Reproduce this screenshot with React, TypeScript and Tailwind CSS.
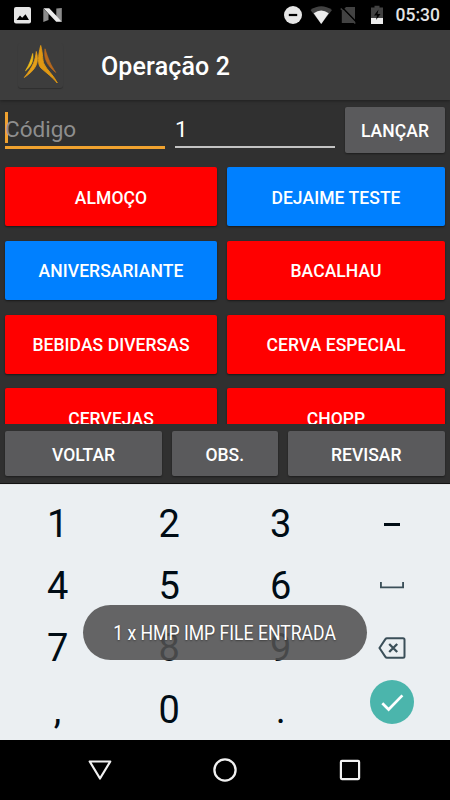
const categories = [
  { name: "ALMOÇO", tone: "bg-[#ff0000]" },
  { name: "DEJAIME TESTE", tone: "bg-[#0080ff]" },
  { name: "ANIVERSARIANTE", tone: "bg-[#0080ff]" },
  { name: "BACALHAU", tone: "bg-[#ff0000]" },
  { name: "BEBIDAS DIVERSAS", tone: "bg-[#ff0000]" },
  { name: "CERVA ESPECIAL", tone: "bg-[#ff0000]" },
  { name: "CERVEJAS", tone: "bg-[#ff0000]" },
  { name: "CHOPP", tone: "bg-[#ff0000]" },
];

const keys = ["1", "2", "3", "-", "4", "5", "6", "space", "7", "8", "9", "del", ",", "0", ".", "ok"];

function StatusBar() {
  return (
    <div className="flex h-[30px] shrink-0 items-center justify-between bg-black">
      <svg className="ml-[14px]" width="49" height="30" viewBox="0 0 49 30">
        <rect x="0" y="7" width="17" height="16.5" rx="2" fill="#e6e6e6" />
        <path d="M2.500 20l3.500-4.500 2.200 2.300 3.300-3.600L15 20z" fill="#000" />
        <path d="M29.300 8.500l5.200 5.500v6L29.300 22zM42.300 8.500l5.500-.5v13.500l-5.500-5z" fill="#8c8c8c" />
        <path d="M29.500 8.300h5.700L48 21.800h-5.800z" fill="#ececec" />
      </svg>
      <div className="flex items-center">
        <svg width="102" height="30" viewBox="0 0 102 30">
          <circle cx="9" cy="15" r="9" fill="#e6e6e6" />
          <rect x="4.800" y="13.900" width="8.400" height="2.200" fill="#000" />
          <path d="M26.500 10Q37.200 2.500 48 10L37.200 24z" fill="#424242" />
          <path d="M29.700 13.200Q37.200 7.800 44.700 13.200L37.200 24z" fill="#ececec" />
          <path d="M62 7h9v16H57.800V11.500z" fill="#424242" />
          <path d="M58.300 7.500L73.300 23" stroke="#000" strokeWidth="1.500" />
          <path d="M56.800 8.500L71.300 23.500" stroke="#424242" strokeWidth="1.500" />
          <path d="M87 7.500h3.500V5.700h5v1.800H99V24H87z" fill="#424242" />
          <path d="M87 18h12v6H87z" fill="#ececec" />
          <path d="M94.500 9.500l-4.500 6h3l-1 4.500 4.500-6h-3z" fill="#000" />
        </svg>
        <span className="mr-[10px] ml-[10px] text-[17.500px] leading-[32px] font-medium text-[#e4e4e4]">05:30</span>
      </div>
    </div>
  );
}

function AppBar() {
  return (
    <header className="z-10 flex h-[70px] shrink-0 items-center bg-[#3d3d3d] shadow-[0_1px_3px_rgba(0,0,0,0.35)]">
      <div className="ml-[18px] h-[45px] w-[45px] rounded-[3px] shadow-[0_1px_1px_rgba(0,0,0,0.25)]">
        <svg width="45" height="45" viewBox="0 0 45 45">
          <path d="M14.700 10.500C13 17 11.500 21 7.500 27.800C13.500 23 15.800 17.500 14.700 10.500z" fill="#f1bd18" stroke="#edb91a" strokeWidth=".7" />
          <path d="M18.300 8.500C17 18 16 22 6.300 34.500C18 26.500 21.500 20 18.300 8.500z" fill="#e5a019" stroke="#e39c18" strokeWidth=".8" />
          <path d="M22.700 2.500C20 13 19.500 22 23 25C28 29.500 35 34.500 39.300 40C36 32.500 28.500 26.500 26 21C24.300 17 25 11 22.700 2.500z" fill="#e09813" stroke="#e09813" strokeWidth=".9" />
          <path d="M27 5.800C25.500 16 29 22 37.700 29.500C32.500 21.500 30.200 16 27 5.800z" fill="#b8681c" stroke="#b8681c" strokeWidth=".7" />
        </svg>
      </div>
      <h1 className="ml-[38px] pt-[3px] text-[25px] leading-[30px] font-medium tracking-[0.15px] text-white">Operação 2</h1>
    </header>
  );
}

function EntryRow() {
  return (
    <div className="flex h-[67px] shrink-0 px-[5px] pt-[7px] text-[22.500px] leading-[30px]">
      <div className="mt-[5px] h-[37px] w-[160px] border-b-[3px] border-[#f0a22f] text-[#8e8e8e]">
        <div className="flex h-[31px] items-center border-l-[3px] border-[#f0a22f]">
          <span className="-ml-[3px] pt-[2px]">Código</span>
        </div>
      </div>
      <div className="mt-[5px] ml-[10px] h-[35.500px] w-[160px] border-b-2 border-[#c3c3c3] text-white">
        <span className="block pt-[2px]">1</span>
      </div>
      <button className="ml-[10px] h-[46px] w-[100px] rounded-[2px] bg-[#5a5a5c] pt-[1px] text-[17.500px] font-medium tracking-[0.07px] text-white shadow-[0_1px_2px_rgba(0,0,0,0.4)]">
        LANÇAR
      </button>
    </div>
  );
}

function Keypad() {
  return (
    <div className="grid h-[256px] shrink-0 auto-rows-[62px] grid-cols-[repeat(4,111.600px)] justify-center border-t border-[#e3e6e8] bg-[#ebeff2] pt-[8px] text-[38px] text-[#000c15]">
      {keys.map((k) => (
        <div key={k} className="flex items-center justify-center">
          {k === "-" && <span className="h-[3px] w-4 bg-[#000c15]" />}
          {k === "space" && (
            <svg width="24" height="8" viewBox="0 0 24 8" className="-mt-[3px]">
              <path d="M.9 1v5.400h22.200V1" fill="none" stroke="#3b4f59" strokeWidth="1.900" />
            </svg>
          )}
          {k === "del" && (
            <svg width="28" height="22" viewBox="0 0 28 22" className="-mt-px">
              <path
                d="M9 1.200h16q1.500 0 1.500 1.500v16.600q0 1.500-1.500 1.500H9q-1 0-1.600-.9L1.500 11 7.400 2.100Q8 1.200 9 1.200z"
                fill="none"
                stroke="#3b4f59"
                strokeWidth="2"
              />
              <path d="M11.200 7l8 8m0-8l-8 8" stroke="#3b4f59" strokeWidth="2.300" />
            </svg>
          )}
          {k === "ok" && (
            <div className="-mt-[15.500px] h-11 w-11 rounded-full bg-[#4bb5ac]">
              <svg width="44" height="44" viewBox="0 0 44 44">
                <path d="M12.300 23.300l6.300 6.200 13.800-14.100" fill="none" stroke="#fff" strokeWidth="2.700" />
              </svg>
            </div>
          )}
          {!["-", "space", "del", "ok"].includes(k) && <span>{k}</span>}
        </div>
      ))}
    </div>
  );
}

function NavBar() {
  return (
    <nav className="flex h-[60px] shrink-0 items-center justify-center gap-[99px] bg-black">
      <svg width="26" height="26" viewBox="0 0 26 26" fill="none" stroke="#f1f1f1" strokeWidth="2.200" strokeLinejoin="round">
        <path d="M2.700 4.500h20.600L13 21.500z" />
      </svg>
      <svg width="26" height="26" viewBox="0 0 26 26" fill="none" stroke="#f1f1f1" strokeWidth="2.300">
        <circle cx="13" cy="13" r="10.600" />
      </svg>
      <svg width="26" height="26" viewBox="0 0 26 26" fill="none" stroke="#f1f1f1" strokeWidth="2.200">
        <rect x="3.900" y="3.900" width="18.200" height="18.200" rx="1" />
      </svg>
    </nav>
  );
}

export default function App() {
  return (
    <div className="relative flex h-[800px] w-[450px] flex-col overflow-hidden bg-[#303030] font-[Roboto,sans-serif]">
      <StatusBar />
      <AppBar />
      <EntryRow />
      <div className="grid h-[257px] shrink-0 auto-rows-[59.300px] grid-cols-[212px_218px] content-start gap-x-[10px] gap-y-[14.500px] overflow-hidden px-[5px]">
        {categories.map((c) => (
          <button
            key={c.name}
            className={`rounded-[2px] pt-[2px] text-[17.500px] font-medium tracking-[0.07px] text-white shadow-[0_1px_2px_rgba(0,0,0,0.5)] ${c.tone}`}
          >
            {c.name}
          </button>
        ))}
      </div>
      <div className="flex h-[60px] shrink-0 gap-[10px] border-b border-black/60 px-[5px] pt-[7px] text-[17.500px] font-medium text-white">
        <button className="h-[45px] w-[157px] rounded-[2px] bg-[#5a5a5c] pt-[3px] shadow-[0_1px_2px_rgba(0,0,0,0.4)]">VOLTAR</button>
        <button className="h-[45px] w-[105.500px] rounded-[2px] bg-[#5a5a5c] pt-[3px] shadow-[0_1px_2px_rgba(0,0,0,0.4)]">OBS.</button>
        <button className="h-[45px] w-[157.500px] rounded-[2px] bg-[#5a5a5c] pt-[3px] shadow-[0_1px_2px_rgba(0,0,0,0.4)]">REVISAR</button>
      </div>
      <Keypad />
      <NavBar />
      {/* Toast */}
      <div className="absolute top-[605px] left-[82.500px] flex h-[55px] w-[284.500px] items-center justify-center rounded-full bg-[#515151]/88">
        <span className="scale-x-[0.88] pt-px text-[20px] whitespace-nowrap text-white [text-shadow:0_1px_2px_rgba(0,0,0,0.4)]">
          1 x HMP IMP FILE ENTRADA
        </span>
      </div>
    </div>
  );
}
